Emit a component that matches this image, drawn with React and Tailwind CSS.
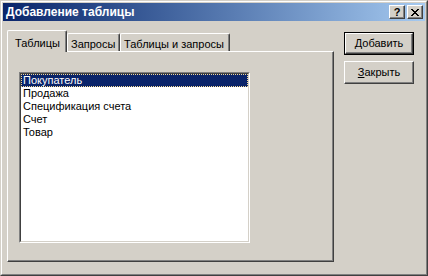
import React from 'react';

const font = { fontFamily: '"Liberation Sans", Arial, sans-serif' };

const items = ['Покупатель', 'Продажа', 'Спецификация счета', 'Счет', 'Товар'];

const CaptionButton = ({ children }) => (
  <div className="w-[16px] h-[14px] bg-[#d4d0c8] border border-t-white border-l-white border-r-[#404040] border-b-[#404040] shadow-[inset_-1px_-1px_#808080] flex items-center justify-center text-[11px] font-bold leading-none text-black">
    {children}
  </div>
);

const Tab = ({ label, active, width }) => (
  <div
    className={
      active
        ? `relative z-10 h-[22px] -mb-px bg-[#d4d0c8] border-t border-l border-t-white border-l-white border-r border-r-[#404040] shadow-[inset_-1px_0_#808080] rounded-tl-[2px] rounded-tr-[2px] pl-[7px] pt-[4px] text-[11px] text-black`
        : `h-[18px] bg-[#d4d0c8] border-t border-l border-t-white border-l-white border-r border-r-[#404040] shadow-[inset_-1px_0_#808080] rounded-tl-[2px] rounded-tr-[2px] pl-[3px] pt-[2px] text-[11px] text-black`
    }
    style={{ width }}
  >
    {label}
  </div>
);

export default function App() {
  return (
    <div className="w-[428px] h-[276px] bg-[#d4d0c8] border border-t-[#d4d0c8] border-l-[#d4d0c8] border-r-[#404040] border-b-[#404040]" style={font}>
      <div className="h-full border border-t-white border-l-white border-r-[#808080] border-b-[#808080] p-px flex flex-col">
        {/* Title bar */}
        <div className="h-[18px] flex items-center justify-between pl-[3px] pr-[2px] bg-gradient-to-r from-[#0a246a] to-[#a6caf0]">
          <span className="text-white font-bold text-[12px] leading-none">Добавление таблицы</span>
          <div className="flex gap-[2px]">
            <CaptionButton>?</CaptionButton>
            <CaptionButton>
              <svg width="8" height="7" viewBox="0 0 8 7">
                <path d="M0 0h2v1h1v1h2V1h1V0h2v1H7v1H6v1H5v1h1v1h1v1h1v1H6V6H5V5H3v1H2v1H0V6h1V5h1V4h1V3H2V2H1V1H0z" fill="#000" />
              </svg>
            </CaptionButton>
          </div>
        </div>

        {/* Body */}
        <div className="flex pl-[4px] pt-[9px]">
          <div className="w-[327px] flex flex-col">
            <div className="flex items-end h-[21px]">
              <Tab label="Таблицы" active width={60} />
              <Tab label="Запросы" width={53} />
              <Tab label="Таблицы и запросы" width={110} />
            </div>
            <div className="h-[211px] border border-t-white border-l-white border-r-[#404040] border-b-[#404040] shadow-[inset_-1px_-1px_#808080] pl-[11px] pt-[20px]">
              <div className="w-[231px] h-[171px] bg-white border border-t-[#808080] border-l-[#808080] border-r-white border-b-white">
                <div className="h-full border border-t-[#404040] border-l-[#404040] border-r-[#d4d0c8] border-b-[#d4d0c8] flex flex-col">
                  {items.map((item, i) => (
                    <div
                      key={item}
                      className={`h-[13px] pl-[1px] text-[11px] leading-[11px] flex items-center ${
                        i === 0
                          ? 'bg-[#0a246a] text-white border border-dotted border-[#f5db95]'
                          : 'text-black border border-transparent'
                      }`}
                    >
                      {item}
                    </div>
                  ))}
                </div>
              </div>
            </div>
          </div>

          {/* Buttons */}
          <div className="ml-[10px] pt-[2px] flex flex-col gap-[6px]">
            <div className="w-[70px] h-[23px] border border-black">
              <div className="h-full border border-t-white border-l-white border-r-[#404040] border-b-[#404040] shadow-[inset_-1px_-1px_#808080] flex items-center justify-center text-[11px] text-black">
                <span><span className="underline">Д</span>обавить</span>
              </div>
            </div>
            <div className="w-[70px] h-[23px] border border-t-white border-l-white border-r-[#404040] border-b-[#404040] shadow-[inset_-1px_-1px_#808080] flex items-center justify-center text-[11px] text-black">
              <span><span className="underline">З</span>акрыть</span>
            </div>
          </div>
        </div>
      </div>
    </div>
  );
}
